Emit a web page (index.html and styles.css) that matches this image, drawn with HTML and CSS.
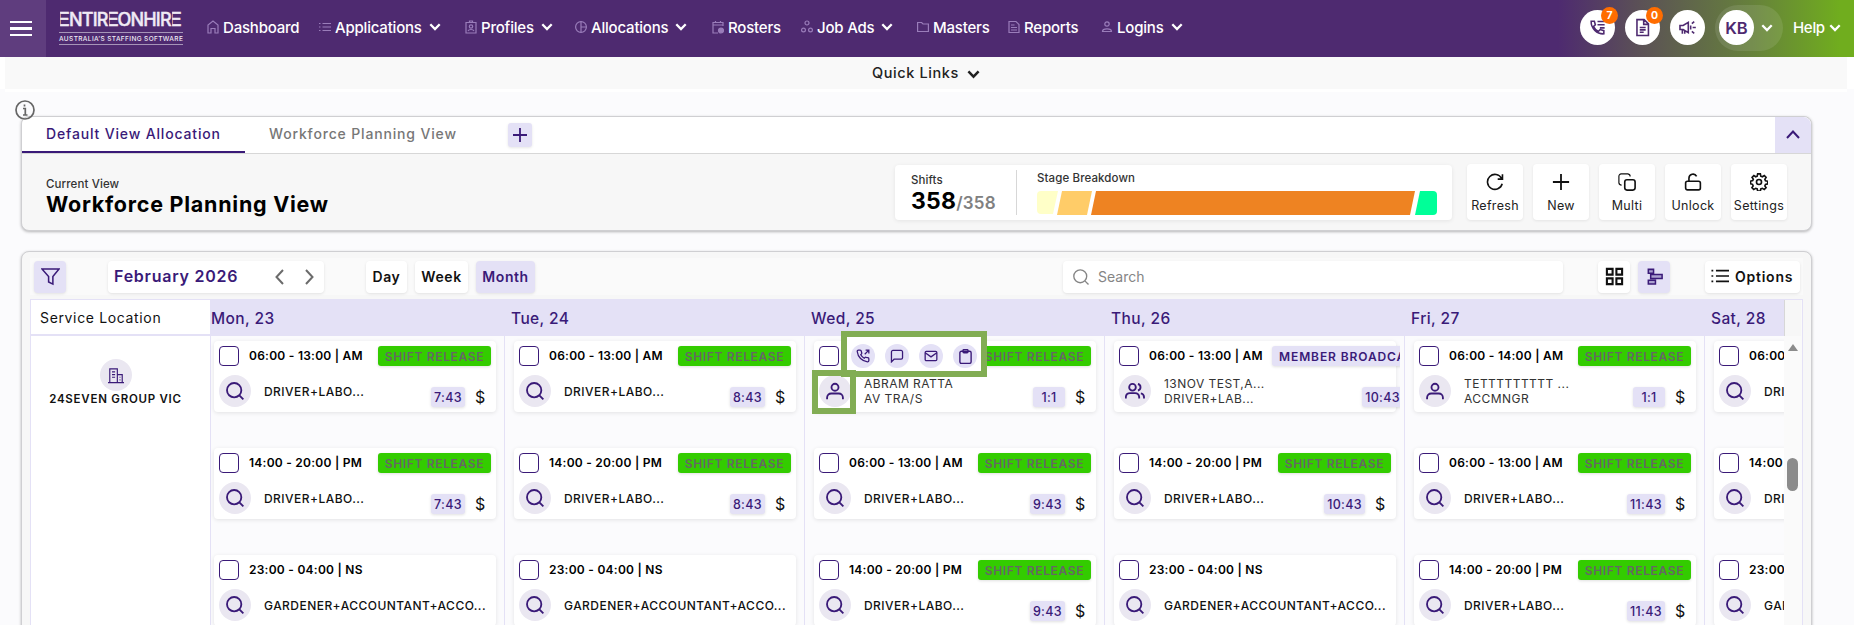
FILE: index.html
```html
<!DOCTYPE html>
<html lang="en">
<head>
<meta charset="utf-8">
<title>Workforce Planning View</title>
<link rel="stylesheet" href="styles.css">
</head>
<body>
<svg class="defs" aria-hidden="true">
  <symbol id="chev" viewBox="0 0 12 8"><path d="M1.3 1.2 6 6l4.7-4.8" fill="none" stroke="currentColor" stroke-width="2.3"/></symbol>
  <symbol id="search" viewBox="0 0 24 24"><circle cx="11" cy="11" r="8.6"/><path d="m17.5 17.5 4.5 4.5"/></symbol>
  <symbol id="user" viewBox="0 0 24 24"><circle cx="12" cy="7.5" r="4.2"/><path d="M2.5 22v-2a5 5 0 0 1 5-5h9a5 5 0 0 1 5 5v2"/></symbol>
  <symbol id="users" viewBox="0 0 24 24"><circle cx="9" cy="7.5" r="4"/><path d="M1 21v-2a5 5 0 0 1 5-4.500h6a5 5 0 0 1 5 4.500v2M15.500 3.600a4 4 0 0 1 0 7.800M19 14.800a4.500 4.500 0 0 1 3.800 4.200v2"/></symbol>
</svg>

<header class="topbar">
  <button class="burger"><i></i><i></i><i></i></button>
  <div class="logo"><b><u>E</u>NTIR<u>E</u>ONHIR<u>E</u></b><span>AUSTRALIA’S STAFFING SOFTWARE</span></div>
  <nav class="nav">
    <a><svg viewBox="0 0 12 14"><path d="M1 13V5l5-4 5 4v8H8V8.500H4V13z"/></svg><span>Dashboard</span></a>
    <a><svg viewBox="0 0 12 14"><path d="M3.500 3.500H12M3.500 7H12M3.500 10.500H12M0 3.500h1.500M0 7h1.500M0 10.500h1.500"/></svg><span>Applications</span><svg class="chev"><use href="#chev"/></svg></a>
    <a><svg viewBox="0 0 12 14"><path d="M1 2.500h10v10.500H1zM4.500 2.500V1h3v1.500M3 11c1-2 5-2 6 0"/><circle cx="6" cy="6.500" r="1.700"/></svg><span>Profiles</span><svg class="chev"><use href="#chev"/></svg></a>
    <a><svg viewBox="0 0 12 14"><circle cx="6" cy="7" r="5.400"/><path d="M6 1.600v10.800M6 7h5.400"/></svg><span>Allocations</span><svg class="chev"><use href="#chev"/></svg></a>
    <a><svg viewBox="0 0 12 14"><path d="M6 13H1V2.500h10V6M1 5h10M3.500 1v2M8.500 1v2"/><circle cx="9" cy="10.500" r="2.500" fill="currentColor"/></svg><span>Rosters</span></a>
    <a><svg viewBox="0 0 12 14"><circle cx="6" cy="3" r="2"/><circle cx="2.500" cy="10" r="1.900"/><circle cx="9.500" cy="10" r="1.900"/></svg><span>Job Ads</span><svg class="chev"><use href="#chev"/></svg></a>
    <a><svg viewBox="0 0 12 14"><path d="M.6 2.500h4l1.400 1.500h5.400v7.500H.6z"/></svg><span>Masters</span></a>
    <a><svg viewBox="0 0 12 14"><path d="M1 1.500h7l3 3v8H1zM3 5h3.500M3 7.500h6M3 10h6"/></svg><span>Reports</span></a>
    <a><svg viewBox="0 0 12 14"><circle cx="6" cy="4" r="2.200"/><path d="M1.500 11.500c0-3.500 9-3.500 9 0z"/></svg><span>Logins</span><svg class="chev"><use href="#chev"/></svg></a>
  </nav>
  <div class="tools">
    <div class="round"><svg viewBox="0 0 24 24"><path d="M4 4h4l1.300 4.600L7 10.700c1.300 2.800 3.300 4.800 6.200 6.200l2.200-2.300L20 16v4c-8.500.5-16.500-7-16-16zM12 4.500h9M12 8.500h9M15 12.500h6"/></svg><em>7</em></div>
    <div class="round"><svg viewBox="0 0 24 24"><path d="M5 2h9l5.500 5.500V22H5zM13.500 2v6h6M8.500 12h7.500M8.500 15h7.500M8.500 18h5"/></svg><em>0</em></div>
    <div class="round"><svg viewBox="0 0 24 24"><path d="M2.500 9.500v5h4l6.500 4V5.500l-6.500 4zM5.500 15v5M8.500 15v5M16 9.500v5M17.500 7l3-2.500M18.500 12h4M17.500 17l3 2.500"/></svg></div>
    <div class="account"><span class="round">KB</span><svg class="chev"><use href="#chev"/></svg></div>
    <span class="help">Help</span><svg class="chev"><use href="#chev"/></svg>
  </div>
</header>

<div class="quick"><span>Quick Links</span><svg class="chev"><use href="#chev"/></svg></div>

<main class="page">
  <section class="panel summary">
    <svg class="info" viewBox="0 0 20 20"><circle cx="10" cy="10" r="9"/><path d="M8 8.500h2.300V15M8 15h4.500M9.500 4.500v2"/></svg>
    <div class="tabs">
      <span class="tab active"><span>Default View Allocation</span></span>
      <span class="tab"><span>Workforce Planning View</span></span>
      <button class="add"><svg viewBox="0 0 14 14"><path d="M7 0v14M0 7h14"/></svg></button>
      <button class="collapse"><svg viewBox="0 0 14 10"><path d="m1 8 6-6.500L13 8"/></svg></button>
    </div>
    <div class="overview">
      <div class="current"><small>Current View</small><h1>Workforce Planning View</h1></div>
      <div class="stats">
        <div class="shifts"><small>Shifts</small><p><b>358</b><span>/358</span></p></div>
        <div class="stage"><small>Stage Breakdown</small>
          <svg viewBox="0 0 400 24"><path d="M4 0h17l-5 23H4a4 4 0 0 1-4-4V4a4 4 0 0 1 4-4z" fill="#ffffc8"/><path d="M25 0h30l-5 24H20z" fill="#ffcc68"/><path d="M59 0h319l-5 24H54z" fill="#ee8322"/><path d="M383 0h13a4 4 0 0 1 4 4v16a4 4 0 0 1-4 4h-18z" fill="#00ff98"/></svg>
        </div>
      </div>
      <div class="actions">
        <button><svg viewBox="0 0 20 20"><path d="M17.300 6A8.300 8.300 0 1 0 18 12M18.300 1.500v5.300H13"/></svg><span>Refresh</span></button>
        <button><svg viewBox="0 0 20 20"><path d="M10 1v18M1 10h18" stroke-width="2"/></svg><span>New</span></button>
        <button><svg viewBox="0 0 20 20"><rect x="7.500" y="7.500" width="11.500" height="11.500" rx="2.500"/><path d="M4 13.500a3 3 0 0 1-3-2.500V3.500A2.500 2.500 0 0 1 3.500 1H11a3 3 0 0 1 2.500 3" stroke-width="1.300"/></svg><span>Multi</span></button>
        <button><svg viewBox="0 0 20 20"><rect x="1.800" y="9.200" width="16.400" height="9.600" rx="2"/><path d="M5.500 9V5.500A4.500 4.500 0 0 1 14 3.700"/></svg><span>Unlock</span></button>
        <button><svg viewBox="0 0 20 20"><circle cx="10" cy="10" r="2.800"/><path d="m8.500 1h3l.5 2.500 1.800.7 2.100-1.400 2 2-1.400 2.200.7 1.600 2.500.5v3l-2.500.5-.7 1.700 1.400 2.100-2 2-2.100-1.400-1.800.7-.5 2.400h-3L8 17.700l-1.700-.7-2.200 1.400-2-2 1.400-2.100-.7-1.700L.6 12V9l2.400-.5.7-1.600L2.300 4.800l2-2 2 1.400L8 3.500z"/></svg><span>Settings</span></button>
      </div>
    </div>
  </section>

  <section class="panel planner">
    <div class="toolbar">
      <button class="sq on"><svg viewBox="0 0 20 20"><path d="M1 2h18l-6.500 8v8l-4.500-2.300V10z"/></svg></button>
      <div class="month"><b>February 2026</b><svg viewBox="0 0 9 16"><path d="M8 1 1.500 8 8 15"/></svg><svg viewBox="0 0 9 16"><path d="m1 1 6.500 7L1 15"/></svg></div>
      <div class="range"><button>Day</button><button>Week</button><button class="on">Month</button></div>
      <div class="search"><svg><use href="#search"/></svg><span>Search</span></div>
      <button class="sq"><svg class="dark" viewBox="0 0 20 20"><path d="M2 2h6v6H2zM12 2h6v6h-6zM2 12h6v6H2zM12 12h6v6h-6z"/></svg></button>
      <button class="sq on gantt"><svg viewBox="0 0 20 20"><path d="M3.500 2.500h5.500v4H3.500zM6 8h12v4H6zM3.500 14h7.500v4H3.500z" fill="#aba1cf"/></svg></button>
      <button class="options"><svg viewBox="0 0 20 16"><path d="M5.500 2H20M5.500 8H20M5.500 14H20M.5 2h2M.5 8h2M.5 14h2"/></svg><span>Options</span></button>
    </div>
    <div class="board">
      <div class="side">
        <div class="side-head">Service Location</div>
        <div class="place"><div class="disc"><svg viewBox="0 0 18 18"><path d="M0 17h18M2 17V1.500h8.500V17M10.500 8H16v9M4.500 5H8M4.500 8H8M4.500 11H8M13 11h1M13 14h1"/></svg></div><span>24SEVEN GROUP VIC</span></div>
      </div>
      <div class="days" id="days"></div>
      <div class="scroll"><div class="corner"></div><div class="up"></div><div class="thumb"></div></div>
    </div>
  </section>
</main>

<div class="mark mark-actions">
  <i><svg viewBox="0 0 24 24"><path d="M22 16.900v3a2 2 0 0 1-2.200 2A19.800 19.800 0 0 1 2.100 4.200 2 2 0 0 1 4.100 2h3a2 2 0 0 1 2 1.700c.1 1 .4 1.900.7 2.800a2 2 0 0 1-.5 2.100L8.100 9.900a16 16 0 0 0 6 6l1.300-1.300a2 2 0 0 1 2.100-.4c.9.300 1.800.6 2.800.7a2 2 0 0 1 1.700 2zM15 9l7-7M16.500 2H22v5.500"/></svg></i>
  <i><svg viewBox="0 0 24 24"><path d="M2.500 22V5a2.500 2.500 0 0 1 2.500-2.500h14A2.500 2.500 0 0 1 21.500 5v10a2.500 2.500 0 0 1-2.500 2.500H7z"/></svg></i>
  <i><svg viewBox="0 0 24 24"><rect x="2" y="4" width="20" height="16" rx="2"/><path d="m2 6.500 10 7 10-7"/></svg></i>
  <i><svg class="tall" viewBox="0 0 24 24"><rect x="3" y="3.500" width="18" height="19.500" rx="2.500"/><rect x="8" y="1" width="8" height="5" rx="1.500"/></svg></i>
</div>
<div class="mark mark-user"></div>
<script src="app.js"></script>
</body>
</html>
```
FILE: styles.css
```css
* { box-sizing: border-box; }
body { margin: 0; height: 625px; overflow: hidden; background: #fbfbfd; font-family: Inter, "Noto Sans", sans-serif; color: #111; position: relative; }
button { border: 0; padding: 0; font: inherit; color: inherit; background: #fff; letter-spacing: inherit; }
svg { fill: none; stroke: currentColor; flex: none; }
.defs { position: absolute; width: 0; height: 0; }
.chev { width: 12px; height: 8px; }

.topbar { height: 57px; display: flex; align-items: center; color: #fff; background: linear-gradient(90deg, #4e2a70 1558px, #5b5156 1640px, #66803c 1750px, #70ad1e 1840px); }
.burger { width: 46px; height: 57px; background: #5f3d7e; display: flex; flex-direction: column; gap: 4px; justify-content: center; align-items: center; padding-right: 4px; flex: none; }
.burger i { width: 22px; height: 2.500px; background: #fff; }
.logo { margin-left: 13px; width: 124px; height: 33px; margin-top: -1px; white-space: nowrap; color: #f0eaf5; flex: none; }
.logo b { display: block; height: 20px; font: 500 18px/16px Inter, sans-serif; letter-spacing: -.85px; -webkit-text-stroke: .4px; }
/* The wordmark's E is three bars with no stem */
.logo u { display: inline-block; text-decoration: none; clip-path: inset(-2px -2px -2px 3.400px); transform: scaleX(1.35); transform-origin: 100% 50%; }
.logo span { display: block; height: 13px; border: solid #a695b8; border-width: 1px 0; font-size: 6.500px; line-height: 12px; font-weight: 500; letter-spacing: .38px; }
.nav { margin-left: 24px; width: 1000px; flex: none; display: grid; grid-template-columns: 112px 146px 110px 137px 89px 116px 91px 93px 90px; font-size: 15px; font-weight: 500; letter-spacing: -.2px; }
.nav a { display: flex; align-items: center; white-space: nowrap; height: 20px; margin-top: -3px; }
.nav a > svg:first-child { width: 12px; height: 14px; margin-right: 4px; color: #9a7dba; stroke-width: 1.200; }
.nav .chev { margin-left: 7px; }
.tools { margin-left: 373px; display: flex; align-items: center; margin-top: -2px; flex: none; }
.round { width: 35px; height: 35px; border-radius: 50%; background: #fff; color: #4e2a70; display: flex; align-items: center; justify-content: center; position: relative; margin-right: 10px; font-weight: 600; font-size: 16.500px; }
.round svg { width: 19px; height: 19px; stroke-width: 2; }
.round em { position: absolute; right: -3px; top: -3px; width: 17px; height: 17px; border-radius: 50%; background: #ff6d00; color: #fff; font: 700 10.500px/17px Inter, sans-serif; text-align: center; }
.account { width: 68px; height: 46px; border-radius: 23px; background: rgba(255,255,255,.1); display: flex; align-items: center; padding-left: 4px; }
.account .round { margin-right: 7px; }
.help { margin-left: 10px; margin-right: 4px; font-size: 15px; font-weight: 500; letter-spacing: -.3px; }

.quick { margin: 0 7px 0 5px; height: 32px; background: #f9f9f9; box-shadow: 0 3px #fff, -5px 0 #fff, 7px 0 #fff; display: flex; align-items: center; padding-left: 867px; gap: 8px; font-size: 14.500px; font-weight: 500; color: #222; letter-spacing: .6px; }
.quick span { margin-top: -1px; }
.quick .chev { width: 13px; height: 9px; margin-top: 2px; }

.page { padding: 27px 0 0 21px; width: 1812px; display: flex; flex-direction: column; gap: 20px; }
.panel { border: 1px solid #cfcfd2; border-radius: 8px; background: #f7f7f7; box-shadow: 0 1px 3px rgba(0,0,0,.28); position: relative; }
.summary { height: 115px; }
.info { position: absolute; left: -7px; top: -17px; width: 20px; height: 20px; color: #666; stroke-width: 1.700; }
.tabs { height: 37px; background: #fff; border-bottom: 1px solid #d7d7d7; border-radius: 8px 8px 0 0; display: flex; align-items: center; font-size: 14px; font-weight: 500; letter-spacing: .84px; overflow: hidden; }
.tab { height: 36px; padding: 0 24px; line-height: 34px; color: #777; white-space: nowrap; }
.tab.active { width: 223px; color: #3a1a78; border-bottom: 2px solid #3a1a78; }
.tab:nth-child(2) { width: 263px; }
.add { width: 24px; height: 24px; border-radius: 3px; background: #e4e1f6; color: #3a1a78; display: grid; place-items: center; box-shadow: 0 1px 3px rgba(0,0,0,.1); }
.add svg { width: 14px; height: 14px; stroke-width: 1.800; }
.collapse { margin-left: auto; width: 36px; height: 37px; background: #e4e1f6; color: #3a1a78; display: grid; place-items: center; }
.collapse svg { width: 14px; height: 10px; stroke-width: 2; }
.overview { display: flex; padding-top: 10px; }
.current { width: 873px; padding: 12px 0 0 24px; }
small { display: block; font-size: 11.500px; line-height: 16px; font-weight: 500; color: #333; letter-spacing: .1px; }
h1 { margin: 0; font-size: 21.500px; line-height: 24px; font-weight: 700; color: #000; letter-spacing: .75px; }
.stats { width: 557px; height: 55px; margin-top: 1px; border-radius: 4px; background: #fff; box-shadow: 0 1px 4px rgba(0,0,0,.08); display: flex; align-items: center; }
.shifts { width: 122px; height: 45px; border-right: 1px solid #d7d7d7; padding-left: 16px; }
.shifts p { margin: 0; line-height: 27px; white-space: nowrap; }
.shifts small { padding-top: 2px; }
.shifts b { font-size: 23px; color: #000; letter-spacing: .2px; }
.shifts span { font-size: 17px; font-weight: 600; color: #808080; letter-spacing: .2px; }
.stage { padding-left: 20px; height: 45px; }
.stage small { line-height: 16px; height: 21px; }
.stage svg { display: block; width: 400px; height: 24px; stroke: none; }
.actions { display: flex; gap: 10px; margin-left: 15px; }
.actions button { width: 56px; height: 56px; border-radius: 4px; box-shadow: 0 1px 3px rgba(0,0,0,.08); display: flex; flex-direction: column; align-items: center; padding-top: 9px; gap: 7px; font-size: 12.500px; line-height: 16px; color: #222; letter-spacing: .3px; }
.actions svg { width: 18px; height: 18px; stroke-width: 1.800; color: #111; }

.planner { height: 400px; padding: 6px 8px 0; }
.toolbar { height: 37px; background: #fafafa; display: flex; align-items: center; padding-left: 4px; font-size: 14px; font-weight: 600; letter-spacing: .55px; }
.toolbar button, .month, .search { height: 32px; border-radius: 4px; background: #fff; box-shadow: 0 1px 3px rgba(0,0,0,.1); flex: none; }
.toolbar button, .month b { padding-bottom: 1px; }
.toolbar .on { background: #e4e1f6; color: #3a1a78; }
.sq { width: 32px; display: grid; place-items: center; }
.sq svg { width: 19px; height: 19px; stroke-width: 1.600; }
.sq svg.dark { stroke-width: 2.200; }
.month { margin-left: 42px; width: 216px; display: flex; align-items: center; padding-left: 6px; color: #6b6b6b; }
.month b { width: 161px; font-size: 16px; font-weight: 600; color: #3a1a78; letter-spacing: .75px; flex: none; }
.month svg { width: 9px; height: 16px; stroke-width: 2; margin-right: 21px; }
.month svg:last-child { margin-right: 0; }
.range { display: flex; gap: 8px; margin-left: 42px; width: 697px; flex: none; }
.range button:nth-child(1) { width: 41px; }
.range button:nth-child(2) { width: 53px; }
.range button:nth-child(3) { width: 59px; }
.search { width: 500px; display: flex; align-items: center; gap: 8px; padding-left: 9px; margin-right: 35px; color: #858585; font-weight: 400; letter-spacing: 0; }
.search svg { width: 18px; height: 18px; stroke-width: 1.800; }
.gantt { margin: 0 35px 0 8px; }
.options { width: 95px; display: flex; align-items: center; padding-left: 6px; gap: 6px; letter-spacing: .75px; }
.options svg { width: 18px; height: 16px; stroke-width: 1.900; }

.board { margin-top: 4px; height: 340px; display: flex; border-top: 1px solid #e4e1f6; border-left: 1px solid #e4e1f6; border-right: 1px solid #e4e1f6; }
.side { width: 179px; background: #fff; flex: none; }
.side-head { height: 36px; border-bottom: 2px solid #e4e1f6; line-height: 35px; padding-left: 9px; font-size: 14px; letter-spacing: .65px; }
.place { padding-top: 23px; display: flex; flex-direction: column; align-items: center; padding-right: 10px; font-size: 11.500px; font-weight: 600; line-height: 17px; letter-spacing: .75px; white-space: nowrap; }
.disc { width: 32px; height: 32px; border-radius: 50%; background: #eae7f1; color: #3a1a78; display: grid; place-items: center; flex: none; }
.place svg { width: 16px; height: 17px; stroke-width: 1.300; }
.days { width: 1574px; display: flex; overflow: hidden; background: #fbfbfd; }
.day { width: 300px; flex: none; }
.day:first-child { width: 294px; }
.day h2 { margin: 0; height: 36px; line-height: 37px; padding-left: 7px; background: #e4e1f6; color: #3a1a78; font-size: 15.500px; font-weight: 500; letter-spacing: .4px; }
.day:first-child h2 { padding-left: 1px; }
.list { height: 304px; border-left: 1px solid #e4e1f6; padding: 5px 0 0 9px; display: flex; flex-direction: column; gap: 36px; }
.day:first-child .list { padding-left: 3px; }
.clip { width: 286px; height: 71px; flex: none; }
.card { width: 282px; height: 71px; border-radius: 4px; background: #fff; box-shadow: 0 1px 4px rgba(0,0,0,.1); padding: 5px; }
.clip.cut { clip-path: inset(-4px 0 -5px -4px); }
.top { display: flex; align-items: center; height: 20px; }
.box { width: 20px; height: 20px; border: 1.500px solid #3a1a78; border-radius: 4px; flex: none; }
.time { padding-left: 10px; font-size: 12px; font-weight: 600; color: #000; width: 139px; flex: none; white-space: nowrap; letter-spacing: .25px; line-height: 22px; }
.tag { width: 113px; height: 20px; border-radius: 3px; background: #3c0; color: #666; font-size: 12px; line-height: 21px; font-weight: 600; letter-spacing: .65px; text-align: center; box-shadow: 0 1px 3px rgba(0,0,0,.12); white-space: nowrap; flex: none; }
.tag.member { background: #e4e1f6; color: #3a1a78; width: 158px; margin-left: -6px; text-align: left; padding-left: 7px; letter-spacing: .9px; }
.low { display: flex; margin-top: 9px; }
.low .disc svg { width: 20px; height: 20px; stroke-width: 2.200; }
.who { width: 120px; padding-left: 13px; font-size: 12px; line-height: 15px; height: 33px; display: flex; flex-direction: column; justify-content: center; font-weight: 500; white-space: nowrap; letter-spacing: .46px; flex: none; }
.who.two { font-weight: 400; color: #333; height: 32px; }
.end { display: flex; margin-left: auto; margin-top: 12px; height: 20px; }
.end.wide { margin-right: -12px; }
.chip { min-width: 32px; padding: 0 3px; border-radius: 3px; background: #e4e1f6; color: #3a1a78; font-size: 12.500px; line-height: 21px; font-weight: 500; text-align: center; box-shadow: 0 1px 3px rgba(0,0,0,.12); letter-spacing: .35px; }
.cash { width: 26px; padding-left: 10px; font-size: 16px; line-height: 21px; }
.scroll { width: 18px; background: #fafafa; display: flex; flex-direction: column; align-items: flex-start; }
.corner { width: 17px; height: 36px; background: #f7f7f7; border-left: 1px solid #d7d7d7; }
.up { margin: 8px 0 0 4px; border: solid transparent; border-width: 0 5px 7px; border-bottom-color: #8b8b8b; }
.thumb { margin: 107px 0 0 3px; width: 11px; height: 33px; border-radius: 6px; background: #8b8b8b; }

/* Callout frames lying over the board */
.mark { position: absolute; border: 6px solid #82ad54; }
.mark-actions { left: 841px; top: 331px; width: 146px; height: 46px; background: #fff; display: flex; align-items: center; gap: 10px; padding-left: 4px; padding-top: 4px; }
.mark-actions i { width: 24px; height: 24px; border-radius: 50%; background: #e4e1f6; color: #3a1a78; display: grid; place-items: center; }
.mark-actions svg { width: 14px; height: 14px; stroke-width: 2.200; }
.mark-actions svg.tall { width: 15px; height: 15px; }
.mark-user { left: 812px; top: 370px; width: 44px; height: 44px; }
```
FILE: app.js
```js
const REL = 'SHIFT RELEASE';
const days = [
  ['Mon, 23', [['06:00 - 13:00 | AM', REL, 'search', ['DRIVER+LABO...'], '7:43'], ['14:00 - 20:00 | PM', REL, 'search', ['DRIVER+LABO...'], '7:43'], ['23:00 - 04:00 | NS', '', 'search', ['GARDENER+ACCOUNTANT+ACCO...'], '']]],
  ['Tue, 24', [['06:00 - 13:00 | AM', REL, 'search', ['DRIVER+LABO...'], '8:43'], ['14:00 - 20:00 | PM', REL, 'search', ['DRIVER+LABO...'], '8:43'], ['23:00 - 04:00 | NS', '', 'search', ['GARDENER+ACCOUNTANT+ACCO...'], '']]],
  ['Wed, 25', [['', REL, 'user', ['ABRAM RATTA', 'AV TRA/S'], '1:1'], ['06:00 - 13:00 | AM', REL, 'search', ['DRIVER+LABO...'], '9:43'], ['14:00 - 20:00 | PM', REL, 'search', ['DRIVER+LABO...'], '9:43']]],
  ['Thu, 26', [['06:00 - 13:00 | AM', 'MEMBER BROADCAST', 'users', ['13NOV TEST,A...', 'DRIVER+LAB...'], '10:43'], ['14:00 - 20:00 | PM', REL, 'search', ['DRIVER+LABO...'], '10:43'], ['23:00 - 04:00 | NS', '', 'search', ['GARDENER+ACCOUNTANT+ACCO...'], '']]],
  ['Fri, 27', [['06:00 - 14:00 | AM', REL, 'user', ['TETTTTTTTTT ...', 'ACCMNGR'], '1:1'], ['06:00 - 13:00 | AM', REL, 'search', ['DRIVER+LABO...'], '11:43'], ['14:00 - 20:00 | PM', REL, 'search', ['DRIVER+LABO...'], '11:43']]],
  ['Sat, 28', [['06:00', '', 'search', ['DRIVER'], ''], ['14:00', '', 'search', ['DRIVER'], ''], ['23:00', '', 'search', ['GARDENER'], '']]],
];

const card = ([time, tag, icon, who, len]) => {
  const member = tag.startsWith('MEMBER');
  return `<div class="clip${member ? ' cut' : ''}"><div class="card">
    <div class="top"><div class="box"></div><div class="time">${time}</div>${tag ? `<div class="tag${member ? ' member' : ''}">${tag}</div>` : ''}</div>
    <div class="low"><div class="disc"><svg><use href="#${icon}"/></svg></div>
      <div class="who${who.length > 1 ? ' two' : ''}">${who.map(w => `<span>${w}</span>`).join('')}</div>
      ${len ? `<div class="end${member ? ' wide' : ''}"><span class="chip">${len}</span>${member ? '' : '<span class="cash">$</span>'}</div>` : ''}
    </div></div></div>`;
};

document.getElementById('days').innerHTML = days.map(([name, cards]) =>
  `<div class="day"><h2>${name}</h2><div class="list">${cards.map(card).join('')}</div></div>`).join('');
```
